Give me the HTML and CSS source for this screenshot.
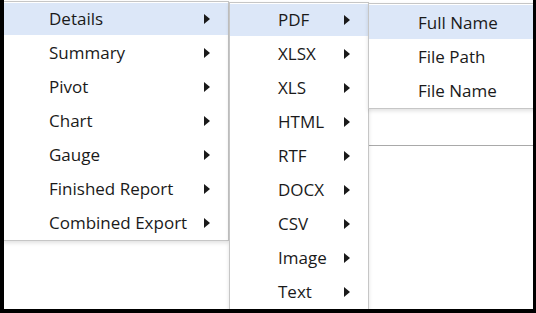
FILE: index.html
```html
<!DOCTYPE html>
<html lang="en">
<head>
    <meta charset="UTF-8">
    <title>Export menu</title>
    <link rel="stylesheet" href="styles.css">
</head>
<body>
    <div class="frame">
        <div class="sheet"></div>

        <!-- first level -->
        <ul class="menu menu-main">
            <li class="item active">Details<span class="arrow"></span></li>
            <li class="item">Summary<span class="arrow"></span></li>
            <li class="item">Pivot<span class="arrow"></span></li>
            <li class="item">Chart<span class="arrow"></span></li>
            <li class="item">Gauge<span class="arrow"></span></li>
            <li class="item">Finished Report<span class="arrow"></span></li>
            <li class="item">Combined Export<span class="arrow"></span></li>
        </ul>

        <!-- formats -->
        <ul class="menu menu-format">
            <li class="item active">PDF<span class="arrow"></span></li>
            <li class="item">XLSX<span class="arrow"></span></li>
            <li class="item">XLS<span class="arrow"></span></li>
            <li class="item">HTML<span class="arrow"></span></li>
            <li class="item">RTF<span class="arrow"></span></li>
            <li class="item">DOCX<span class="arrow"></span></li>
            <li class="item">CSV<span class="arrow"></span></li>
            <li class="item">Image<span class="arrow"></span></li>
            <li class="item">Text<span class="arrow"></span></li>
        </ul>

        <!-- naming -->
        <ul class="menu menu-name">
            <li class="item active">Full Name</li>
            <li class="item">File Path</li>
            <li class="item">File Name</li>
        </ul>
    </div>
</body>
</html>
```

FILE: styles.css
```css
body {
    margin: 0;
    font-family: 'Open Sans', 'Noto Sans', sans-serif;
    color: #1a1a1a;
    background: #fff;
}

.frame {
    position: relative;
    width: 536px;
    height: 313px;
    box-sizing: border-box;
    border-left: 4px solid #000;
    border-right: 3px solid #000;
    border-bottom: 4px solid #000;
    background: #fff;
    overflow: hidden;
}

.sheet {
    margin-top: 145px;
    border-top: 1px solid #a9a9a9;
}

.menu {
    position: absolute;
    margin: 0;
    list-style: none;
    background: #fff;
    border: 1px solid #c6c6c6;
    box-shadow: 0 2px 4px rgba(0, 0, 0, 0.12);
    box-sizing: border-box;
}

.menu-main {
    left: -1px;
    top: 1px;
    width: 226px;
    padding: 0 18px 0 45px;
    z-index: 1;
}

.menu-format {
    left: 225px;
    top: 2px;
    width: 140px;
    padding: 0 18px 0 48px;
    z-index: 2;
}

.menu-name {
    left: 364px;
    top: 3px;
    width: 180px;
    padding: 2px 0 0 49px;
    z-index: 3;
}

.item {
    position: relative;
    display: flex;
    align-items: center;
    justify-content: space-between;
    height: 34px;
    padding-bottom: 2px;
    box-sizing: border-box;
    font-size: 17px;
    white-space: nowrap;
}

.item.active::before {
    content: "";
    position: absolute;
    top: 1px;
    bottom: 1px;
    left: -60px;
    right: -20px;
    background: #dce7f8;
    z-index: -1;
}

.menu-main .item.active::before {
    left: -45px;
    right: -18px;
}

.menu-format .item.active::before {
    left: -48px;
    right: -18px;
}

.menu-name .item.active::before {
    left: -49px;
    top: -1px;
}

.arrow {
    width: 0;
    height: 0;
    margin-top: 2px;
    border-top: 5px solid transparent;
    border-bottom: 5px solid transparent;
    border-left: 6px solid #1a1a1a;
}
```
